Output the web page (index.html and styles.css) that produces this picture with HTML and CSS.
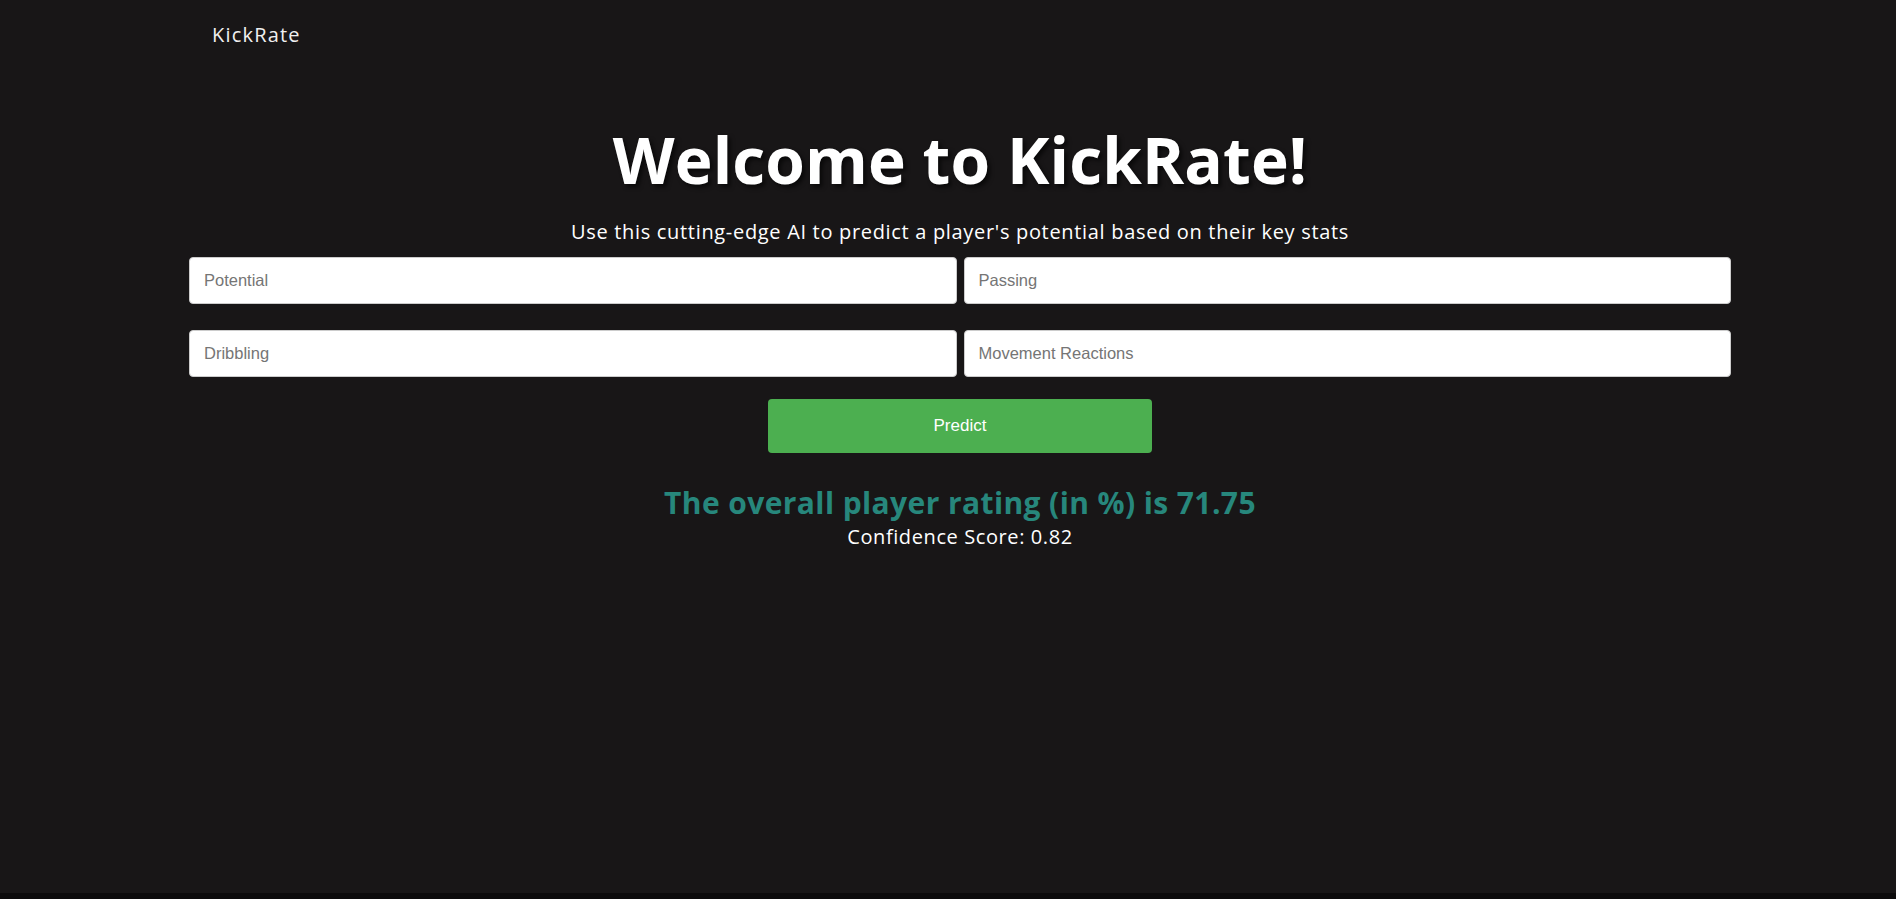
FILE: index.html
```html
<!DOCTYPE html>
<html lang="en">
<head>
<meta charset="utf-8">
<title>KickRate</title>
<link rel="stylesheet" href="styles.css">
</head>
<body>
<div class="page">
  <nav class="navbar">
    <span class="brand">KickRate</span>
  </nav>
  <main class="main">
    <h1 class="title">Welcome to KickRate!</h1>
    <p class="subtitle">Use this cutting-edge AI to predict a player's potential based on their key stats</p>
    <form class="form">
      <div class="grid">
        <input class="field" type="text" placeholder="Potential">
        <input class="field" type="text" placeholder="Passing">
        <input class="field" type="text" placeholder="Dribbling">
        <input class="field" type="text" placeholder="Movement Reactions">
      </div>
      <button class="predict" type="button">Predict</button>
    </form>
    <div class="result">
      <h2 class="rating">The overall player rating (in %) is 71.75</h2>
      <p class="confidence">Confidence Score: 0.82</p>
    </div>
  </main>
</div>
</body>
</html>
```

FILE: styles.css
```css
html {
  background: #0c0b0c;
}
body {
  margin: 0;
  font-family: "Open Sans", "DejaVu Sans", sans-serif;
  color: #ffffff;
}
.page {
  background: #181617;
  min-height: 893px;
}
.navbar {
  height: 68px;
  display: flex;
  align-items: center;
  padding-left: 212px;
}
.brand {
  font-size: 20px;
  font-weight: 500;
  letter-spacing: 1.2px;
  color: #f0f0f0;
}
.main {
  width: 1542px;
  margin-left: 189px;
  display: flex;
  flex-direction: column;
  align-items: center;
}
.title {
  margin: 52px 0 0;
  font-size: 64px;
  line-height: 80px;
  font-weight: 700;
  letter-spacing: 0.1px;
  text-shadow: 3px 3px 4px rgba(0, 0, 0, 0.6);
}
.subtitle {
  margin: 19px 0 0;
  font-size: 20px;
  line-height: 26px;
  letter-spacing: 0.68px;
}
.form {
  margin-top: 12px;
  width: 100%;
  display: flex;
  flex-direction: column;
  align-items: center;
}
.grid {
  width: 100%;
  display: grid;
  grid-template-columns: 1fr 1fr;
  column-gap: 7px;
  row-gap: 26px;
}
.field {
  box-sizing: border-box;
  height: 47px;
  padding: 0 14px;
  border: 1px solid #cccccc;
  border-radius: 4px;
  background: #ffffff;
  font-family: "Liberation Sans", Arial, sans-serif;
  font-size: 16.5px;
  color: #333333;
}
.field::placeholder {
  color: #757575;
}
.predict {
  margin-top: 22px;
  width: 384px;
  height: 54px;
  border: none;
  border-radius: 4px;
  background: #4caf50;
  color: #ffffff;
  font-family: "Liberation Sans", Arial, sans-serif;
  font-size: 17px;
}
.result {
  margin-top: 32px;
  display: flex;
  flex-direction: column;
  align-items: center;
}
.rating {
  margin: 0;
  font-size: 30px;
  line-height: 36px;
  font-weight: 700;
  letter-spacing: 0.4px;
  color: #27877c;
}
.confidence {
  margin: 4px 0 0;
  font-size: 20px;
  line-height: 24px;
  letter-spacing: 0.6px;
}
```
